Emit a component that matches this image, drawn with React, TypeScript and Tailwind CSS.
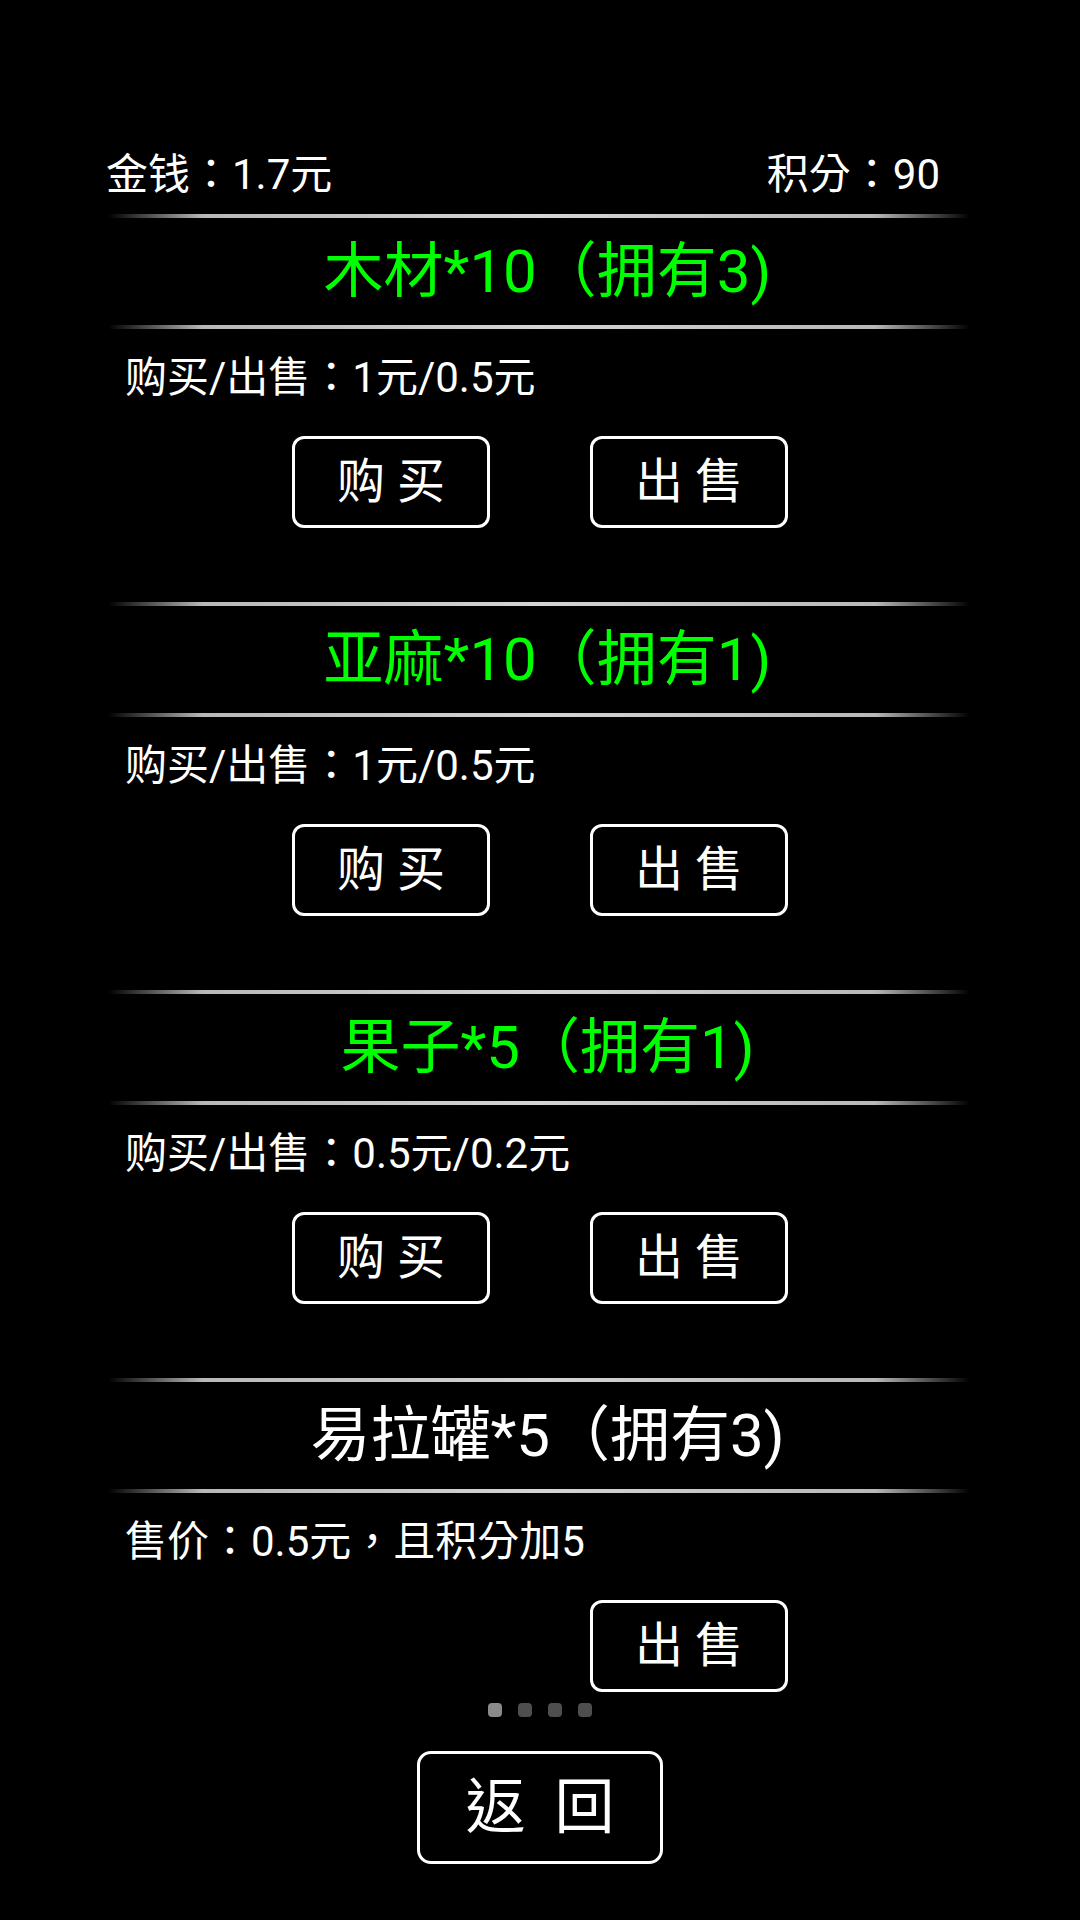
import React from "react";

const FONT = { fontFamily: '"Roboto", "Noto Sans CJK TC", "Noto Sans CJK SC", sans-serif' };

function Sep() {
  return (
    <div className="ml-[108px] w-[862px] h-[4px] bg-[linear-gradient(to_right,rgba(200,200,200,0)_0%,#b8b8b8_11%,#d4d4d4_50%,#b8b8b8_89%,rgba(200,200,200,0)_100%)]" />
  );
}

function Btn({ label, hidden }: { label: string; hidden?: boolean }) {
  return (
    <div
      className={
        "w-[198px] h-[92px] rounded-[12px] border-[3px] flex items-center justify-center text-[48px] text-white whitespace-pre " +
        (hidden ? "border-transparent invisible" : "border-white")
      }
    >
      {label}
    </div>
  );
}

type Item = {
  title: string;
  green: boolean;
  price: string;
  buy: boolean;
};

const items: Item[] = [
  { title: "木材*10（拥有3)", green: true, price: "购买/出售：1元/0.5元", buy: true },
  { title: "亚麻*10（拥有1)", green: true, price: "购买/出售：1元/0.5元", buy: true },
  { title: "果子*5（拥有1)", green: true, price: "购买/出售：0.5元/0.2元", buy: true },
  { title: "易拉罐*5（拥有3)", green: false, price: "售价：0.5元，且积分加5", buy: false },
];

function Section({ item, last }: { item: Item; last: boolean }) {
  return (
    <div className={last ? "" : "mb-[74px]"}>
      <Sep />
      <div
        className={
          "h-[107px] pl-[15px] flex items-center justify-center text-[60px] " +
          (item.green ? "text-[#00ff00]" : "text-white")
        }
      >
        {item.title}
      </div>
      <Sep />
      <div className="h-[96px] flex items-center pl-[125px] text-[42px] text-white">
        {item.price}
      </div>
      <div className="mt-[11px] flex justify-center gap-[100px]">
        <Btn label="购 买" hidden={!item.buy} />
        <Btn label="出 售" />
      </div>
    </div>
  );
}

export default function App() {
  return (
    <div className="w-[1080px] h-[1920px] bg-black overflow-hidden" style={FONT}>
      <div className="pt-[144px]">
        <div className="h-[60px] flex items-center justify-between pl-[106px] pr-[140px] text-[42px] text-white">
          <span>金钱：1.7元</span>
          <span>积分：90</span>
        </div>
        <div className="mt-[10px]">
          {items.map((it, i) => (
            <Section key={i} item={it} last={i === items.length - 1} />
          ))}
        </div>
        <div className="mt-[11px] h-[14px] flex justify-center gap-[16px]">
          <div className="w-[14px] h-[14px] rounded-[4px] bg-[#8a8a8a]" />
          <div className="w-[14px] h-[14px] rounded-[4px] bg-[#4e4e4e]" />
          <div className="w-[14px] h-[14px] rounded-[4px] bg-[#4e4e4e]" />
          <div className="w-[14px] h-[14px] rounded-[4px] bg-[#4e4e4e]" />
        </div>
        <div className="mt-[34px] flex justify-center">
          <div className="w-[246px] h-[113px] rounded-[14px] border-[3px] border-white flex items-center justify-center text-[60px] text-white [word-spacing:14px]">
            返 回
          </div>
        </div>
      </div>
    </div>
  );
}
